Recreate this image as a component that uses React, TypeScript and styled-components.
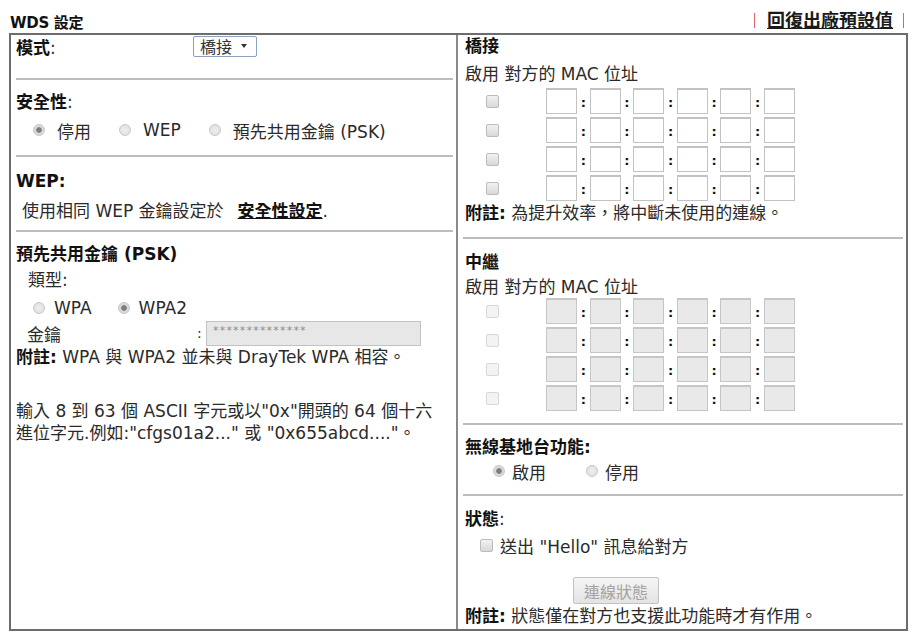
import React from 'react';
import styled, { createGlobalStyle } from 'styled-components';

const Global = createGlobalStyle`
  html, body { margin: 0; padding: 0; background: #ffffff; }
  body {
    font-family: "DejaVu Sans", "Noto Sans CJK TC", sans-serif;
    color: #2a2a2a;
  }
`;

const Page = styled.div`
  width: 899px;
  margin-left: 9px;
  padding-top: 8px;
`;

const TitleBar = styled.div`
  display: flex;
  align-items: center;
  justify-content: space-between;
  height: 25px;
`;

const Title = styled.div`
  font-size: 15px;
  font-weight: bold;
  color: #111;
  padding: 2px 0 0 1px;
  letter-spacing: -0.3px;
`;

const Links = styled.div`
  display: flex;
  align-items: center;
  padding-right: 4px;
`;

const Pipe = styled.span`
  width: 1px;
  height: 15px;
  background: #e06464;
`;

const ResetLink = styled.a`
  font-size: 18px;
  font-weight: bold;
  color: #1a1a1a;
  text-decoration: underline;
  margin: 0 10px 0 12px;
  line-height: 22px;
`;

const Panel = styled.div`
  display: grid;
  grid-template-columns: 447px 1fr;
  height: 598px;
  box-sizing: border-box;
  border: 2px solid #6c6c6c;
`;

const Column = styled.div<{ $divider?: boolean }>`
  display: flex;
  flex-direction: column;
  border-right: ${p => (p.$divider ? '2px solid #8a8a8a' : 'none')};
`;

const Section = styled.section<{ $pt?: number; $pb?: number; $rule?: boolean; $inset?: number }>`
  margin: 0 3px 0 5px;
  padding: ${p => p.$pt ?? 0}px 0 ${p => p.$pb ?? 0}px ${p => p.$inset ?? 0}px;
  border-bottom: ${p => (p.$rule ? '2px solid #bdbdbd' : 'none')};
`;

const Line = styled.div<{ $mt?: number; $indent?: number }>`
  font-size: 17px;
  line-height: 22px;
  margin-top: ${p => p.$mt ?? 0}px;
  padding-left: ${p => p.$indent ?? 0}px;
  white-space: nowrap;
`;

const Heading = styled.span`
  font-weight: bold;
  color: #111;
`;

const Strong = styled.b`
  color: #111;
`;

const UnderlinedLink = styled.a`
  font-weight: bold;
  color: #111;
  text-decoration: underline;
  margin-left: 14px;
`;

const ModeRow = styled.div`
  display: flex;
  align-items: center;
  height: 22px;
  font-size: 17px;
`;

const ModeLabel = styled.div`
  width: 177px;
`;

const Select = styled.div`
  display: inline-flex;
  align-items: center;
  gap: 9px;
  width: 64px;
  height: 21px;
  box-sizing: border-box;
  padding-left: 6px;
  border: 1px solid #8e9fbf;
  border-radius: 2px;
  font-size: 16px;
  color: #333;
  background: #fff;
`;

const Caret = styled.span`
  width: 0;
  height: 0;
  border-left: 3px solid transparent;
  border-right: 3px solid transparent;
  border-top: 4px solid #333;
`;

const ChoiceRow = styled.div<{ $mt?: number; $indent?: number; $gap?: number }>`
  display: flex;
  align-items: center;
  height: 22px;
  margin-top: ${p => p.$mt ?? 0}px;
  padding-left: ${p => p.$indent ?? 0}px;
  gap: ${p => p.$gap ?? 28}px;
  font-size: 17px;
`;

const Choice = styled.label<{ $gap?: number }>`
  display: inline-flex;
  align-items: center;
  gap: ${p => p.$gap ?? 12}px;
  white-space: nowrap;
`;

const Radio = styled.span<{ $on?: boolean }>`
  width: 12px;
  height: 12px;
  box-sizing: border-box;
  border-radius: 50%;
  border: 1px solid #c8c8c8;
  background: ${p =>
    p.$on
      ? 'radial-gradient(circle, #7d7d7d 0 2.4px, #d9d9d9 3.2px)'
      : 'radial-gradient(circle, #efefef 0, #dcdcdc 100%)'};
`;

const Check = styled.span<{ $faded?: boolean }>`
  width: 13px;
  height: 13px;
  box-sizing: border-box;
  border-radius: 2px;
  border: 1px solid ${p => (p.$faded ? '#d8d8d8' : '#bcbcbc')};
  background: ${p =>
    p.$faded ? '#f3f3f3' : 'linear-gradient(#f1f1f1, #d9d9d9)'};
`;

const KeyRow = styled.div`
  display: flex;
  align-items: center;
  height: 26px;
  margin-top: 1px;
  padding-left: 11px;
  font-size: 17px;
`;

const KeyLabel = styled.span`
  width: 170px;
`;

const KeyColon = styled.span`
  width: 9px;
  font-size: 14px;
`;

const KeyInput = styled.div`
  width: 215px;
  height: 25px;
  box-sizing: border-box;
  border: 1px solid #c2c2c2;
  background: #e7e7e7;
  padding: 2px 6px;
  font-size: 11px;
  letter-spacing: 1.2px;
  line-height: 13px;
  color: #8c8c8c;
  font-family: "DejaVu Sans", sans-serif;
`;

const MacList = styled.div<{ $mt?: number }>`
  display: flex;
  flex-direction: column;
  gap: 3px;
  margin-top: ${p => p.$mt ?? 0}px;
`;

const MacRow = styled.div`
  display: flex;
  align-items: center;
  height: 26px;
  padding-left: 21px;
`;

const MacFields = styled.div`
  display: flex;
  align-items: center;
  margin-left: 47px;
`;

const Octet = styled.span<{ $disabled?: boolean }>`
  width: 31px;
  height: 26px;
  box-sizing: border-box;
  border: 1px solid ${p => (p.$disabled ? '#c6c6c6' : '#c2c2c2')};
  border-top-width: 2px;
  background: ${p => (p.$disabled ? '#e9e9e9' : '#ffffff')};
`;

const OctetSep = styled.span`
  width: 12.6px;
  text-align: center;
  font-size: 13px;
  font-weight: bold;
  color: #111;
  line-height: 26px;
  padding-top: 3px;
`;

const HelloRow = styled.div`
  display: flex;
  align-items: center;
  gap: 7px;
  height: 22px;
  margin-top: 4px;
  padding-left: 15px;
  font-size: 17px;
`;

const Button = styled.button`
  display: block;
  width: 86px;
  height: 27px;
  margin: 21px 0 0 108px;
  padding: 0;
  border: 1px solid #c3c3c3;
  border-radius: 2px;
  background: linear-gradient(#f5f5f5, #e3e3e3);
  color: #a3a3a3;
  font-family: "DejaVu Sans", "Noto Sans CJK TC", sans-serif;
  font-size: 16px;
`;

function MacTable({ disabled }: { disabled?: boolean }) {
  const rows = [0, 1, 2, 3];
  const octets = [0, 1, 2, 3, 4, 5];
  return (
    <MacList $mt={disabled ? 0 : 3}>
      {rows.map(r => (
        <MacRow key={r}>
          <Check $faded={disabled} />
          <MacFields>
            {octets.map(o => (
              <React.Fragment key={o}>
                {o > 0 && <OctetSep>:</OctetSep>}
                <Octet $disabled={disabled} />
              </React.Fragment>
            ))}
          </MacFields>
        </MacRow>
      ))}
    </MacList>
  );
}

export default function App() {
  return (
    <>
      <Global />
      <Page>
        <TitleBar>
          <Title>WDS 設定</Title>
          <Links>
            <Pipe />
            <ResetLink>回復出廠預設值</ResetLink>
            <Pipe />
          </Links>
        </TitleBar>

        <Panel>
          <Column $divider>
            <Section $pb={21} $rule>
              <ModeRow>
                <ModeLabel>
                  <Heading>模式</Heading>:
                </ModeLabel>
                <Select>
                  橋接
                  <Caret />
                </Select>
              </ModeRow>
            </Section>

            <Section $pt={11} $pb={14} $rule>
              <Line>
                <Heading>安全性</Heading>:
              </Line>
              <ChoiceRow $mt={6} $indent={17}>
                <Choice>
                  <Radio $on />
                  停用
                </Choice>
                <Choice>
                  <Radio />
                  WEP
                </Choice>
                <Choice>
                  <Radio />
                  預先共用金鑰 (PSK)
                </Choice>
              </ChoiceRow>
            </Section>

            <Section $pt={13} $pb={8} $rule>
              <Line>
                <Heading>WEP:</Heading>
              </Line>
              <Line $mt={8} $indent={6}>
                使用相同 WEP 金鑰設定於<UnderlinedLink>安全性設定</UnderlinedLink>.
              </Line>
            </Section>

            <Section $pt={11}>
              <Line>
                <Heading>預先共用金鑰 (PSK)</Heading>
              </Line>
              <Line $mt={4} $indent={12}>
                類型:
              </Line>
              <ChoiceRow $mt={6} $indent={17} $gap={26}>
                <Choice $gap={9}>
                  <Radio />
                  WPA
                </Choice>
                <Choice $gap={9}>
                  <Radio $on />
                  WPA2
                </Choice>
              </ChoiceRow>
              <KeyRow>
                <KeyLabel>金鑰</KeyLabel>
                <KeyColon>:</KeyColon>
                <KeyInput>**************</KeyInput>
              </KeyRow>
              <Line>
                <Strong>附註:</Strong> WPA 與 WPA2 並未與 DrayTek WPA 相容。
              </Line>
              <Line $mt={32}>輸入 8 到 63 個 ASCII 字元或以"0x"開頭的 64 個十六</Line>
              <Line>進位字元.例如:"cfgs01a2..." 或 "0x655abcd...."。</Line>
            </Section>
          </Column>

          <Column>
            <Section $pb={13} $rule $inset={2}>
              <Line>
                <Heading>橋接</Heading>
              </Line>
              <Line $mt={6}>啟用 對方的 MAC 位址</Line>
              <MacTable />
              <Line $mt={1}>
                <Strong>附註:</Strong> 為提升效率，將中斷未使用的連線。
              </Line>
            </Section>

            <Section $pt={12} $pb={12} $rule $inset={2}>
              <Line>
                <Heading>中繼</Heading>
              </Line>
              <Line $mt={3}>啟用 對方的 MAC 位址</Line>
              <MacTable disabled />
            </Section>

            <Section $pt={11} $pb={12} $rule $inset={2}>
              <Line>
                <Heading>無線基地台功能:</Heading>
              </Line>
              <ChoiceRow $mt={2} $indent={28} $gap={40}>
                <Choice $gap={7}>
                  <Radio $on />
                  啟用
                </Choice>
                <Choice $gap={7}>
                  <Radio />
                  停用
                </Choice>
              </ChoiceRow>
            </Section>

            <Section $pt={12} $inset={2}>
              <Line>
                <Heading>狀態</Heading>:
              </Line>
              <HelloRow>
                <Check />
                送出 "Hello" 訊息給對方
              </HelloRow>
              <Button disabled>連線狀態</Button>
              <Line $mt={1}>
                <Strong>附註:</Strong> 狀態僅在對方也支援此功能時才有作用。
              </Line>
            </Section>
          </Column>
        </Panel>
      </Page>
    </>
  );
}
